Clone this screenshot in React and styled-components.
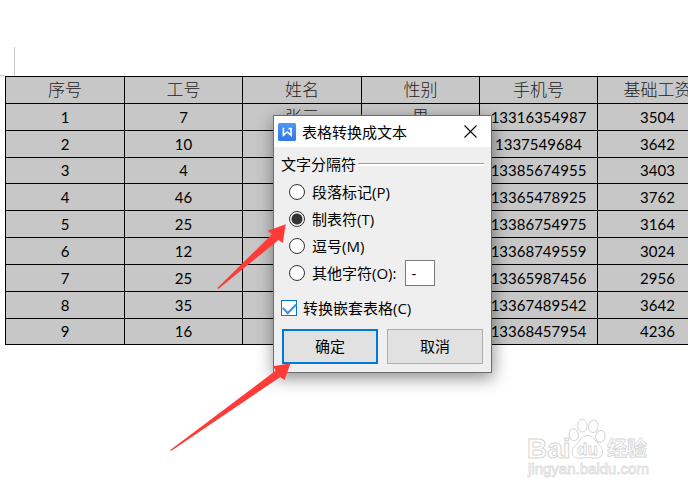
import React from "react";
import styled, { createGlobalStyle } from "styled-components";

const Global = createGlobalStyle`
  * { box-sizing: border-box; }
  html, body, #root { margin: 0; min-height: 100%; background: #fff; }
  body { overflow: hidden; color: #000; font-family: "Open Sans", "Noto Sans CJK SC", sans-serif; }
`;

const Page = styled.main`
  position: relative;
  min-height: 100vh;
  overflow: hidden;
  padding-top: 47px;
`;

const MarginMark = styled.div`
  width: 15px;
  height: 29px;
  border-right: 1px solid #c8c8c8;
  background: linear-gradient(#c8c8c8, #c8c8c8) left bottom / 5px 1px no-repeat;
`;

const Sheet = styled.table`
  table-layout: fixed;
  width: 712px;
  margin-left: 5px;
  border-collapse: collapse;
  background: #c7c7c7;
  font: 15px/20px Lato, "Noto Sans CJK SC", sans-serif;
  tr { height: 27px; }
  tbody tr:nth-child(3), tbody tr:last-child { height: 26px; }
`;

const Column = styled.col`
  width: ${(p) => p.$width}px;
`;

const Cell = styled.td`
  padding: 0 0 1px;
  border: 1px solid #000;
  text-align: center;
  white-space: nowrap;
`;

const HeadCell = styled(Cell).attrs({ as: "th", scope: "col" })`
  color: #222;
  font: 300 17px/20px "Noto Sans CJK SC", sans-serif;
  padding-bottom: 3px;
`;

const Word = styled.span`
  color: #222;
  font: 300 17px/20px "Noto Sans CJK SC", sans-serif;
`;

const Dialog = styled.section`
  position: absolute;
  left: 273px;
  top: 115px;
  width: 219px;
  border: 1px solid #6d6d6d;
  background: #efefef;
  box-shadow: 1px 5px 16px rgba(0, 0, 0, 0.45);
  font-size: 15px;
  line-height: 20px;
`;

const TitleBar = styled.header`
  display: flex;
  align-items: center;
  gap: 6px;
  height: 31px;
  padding: 0 14px 0 4px;
  background: #fff;
`;

const Title = styled.h1`
  flex: 1;
  margin: 0;
  font-size: 15px;
  font-weight: 400;
`;

const CloseButton = styled.button`
  display: flex;
  padding: 0;
  border: 0;
  background: none;
`;

const Form = styled.form`
  padding: 7px 7px 8px;
`;

const Group = styled.fieldset`
  display: flex;
  flex-direction: column;
  margin: 0;
  padding: 0;
  border: 0;
`;

const Legend = styled.legend`
  display: flex;
  align-items: center;
  gap: 2px;
  width: 100%;
  padding: 0;
  margin-bottom: 4px;
  &::after { content: ""; flex: 1; height: 2px; border-top: 1px solid #a0a0a0; background: #fff; }
`;

const Choice = styled.div`
  display: flex;
  align-items: center;
  gap: 7px;
  height: 27px;
  padding-left: 8px;
`;

const Radio = styled.input.attrs({ type: "radio", name: "separator" })`
  appearance: none;
  width: 16px;
  height: 16px;
  margin: 0;
  border: 1px solid #333;
  border-radius: 50%;
  background: #fff;
  &:checked { background: radial-gradient(circle, #333 0 5px, #fff 6px); }
`;

const CharInput = styled.input`
  width: 30px;
  height: 26px;
  margin: 0 0 0 2px;
  padding: 0 5px;
  border: 1px solid #7a7a7a;
  background: #fff;
  font: inherit;
`;

const CheckRow = styled.div`
  display: flex;
  align-items: center;
  gap: 6px;
  margin: 12px 0 11px;
`;

const CheckBox = styled.input.attrs({ type: "checkbox" })`
  appearance: none;
  width: 16px;
  height: 16px;
  margin: 0;
  border: 1px solid #0078d7;
  background: #fff;
  display: grid;
  place-items: center;
  &:checked::after {
    content: "";
    width: 11px;
    height: 6px;
    border: solid #3a8fe0;
    border-width: 0 0 2px 2px;
    transform: translateY(-1px) rotate(-45deg);
  }
`;

const Actions = styled.div`
  display: grid;
  grid-template-columns: 1fr 1fr;
  gap: 9px;
  padding: 0 1px;
`;

const Button = styled.button`
  height: 35px;
  padding: 0 0 2px;
  border: ${(p) => (p.$primary ? "2px solid #0078d7" : "1px solid #adadad")};
  background: #e1e1e1;
  color: #000;
  font: inherit;
`;

const Arrows = styled.svg`
  position: absolute;
  left: 0;
  top: 0;
  pointer-events: none;
`;

const Watermark = styled.svg`
  position: absolute;
  right: 34px;
  bottom: 13px;
  font-family: "Liberation Sans", "Noto Sans CJK SC", sans-serif;
  font-weight: 700;
`;

const columnWidths = [119, 118, 119, 118, 118, 120];
const headers = ["序号", "工号", "姓名", "性别", "手机号", "基础工资"];
const rows = [
  ["1", "7", <Word>张三</Word>, <Word>男</Word>, "13316354987", "3504"],
  ["2", "10", "", "", "1337549684", "3642"],
  ["3", "4", "", "", "13385674955", "3403"],
  ["4", "46", "", "", "13365478925", "3762"],
  ["5", "25", "", "", "13386754975", "3164"],
  ["6", "12", "", "", "13368749559", "3024"],
  ["7", "25", "", "", "13365987456", "2956"],
  ["8", "35", "", "", "13367489542", "3642"],
  ["9", "16", "", "", "13368457954", "4236"],
];
const separators = [
  ["paragraph", "段落标记(P)"],
  ["tab", "制表符(T)"],
  ["comma", "逗号(M)"],
  ["other", "其他字符(O):"],
];

const AppIcon = () => (
  <svg width="18" height="18" viewBox="0 0 18 18" aria-hidden="true">
    <defs>
      <linearGradient id="tile" x2="0" y2="1">
        <stop stopColor="#4f96f3" />
        <stop offset="1" stopColor="#3079e6" />
      </linearGradient>
    </defs>
    <rect width="18" height="18" rx="1.5" fill="url(#tile)" />
    <path d="M5.400 4.800v7.400L9.200 9l3.900 3.200V5.600H10.500" fill="none" stroke="#fff" strokeWidth="1.600" />
  </svg>
);

const CloseIcon = () => (
  <svg width="13" height="13" viewBox="0 0 13 13" aria-hidden="true">
    <path d="M.5.5l12 12M12.500.5l-12 12" stroke="#000" strokeWidth="1.100" />
  </svg>
);

export default function App() {
  return (
    <>
      <Global />
      <Page>
        <MarginMark />
        <Sheet>
          <colgroup>
            {columnWidths.map((w, i) => <Column key={i} $width={w} />)}
          </colgroup>
          <thead>
            <tr>{headers.map((h) => <HeadCell key={h}>{h}</HeadCell>)}</tr>
          </thead>
          <tbody>
            {rows.map((row) => (
              <tr key={row[0]}>{row.map((value, i) => <Cell key={i}>{value}</Cell>)}</tr>
            ))}
          </tbody>
        </Sheet>
        <Dialog role="dialog" aria-labelledby="dialog-title">
          <TitleBar>
            <AppIcon />
            <Title id="dialog-title">表格转换成文本</Title>
            <CloseButton type="button" aria-label="关闭"><CloseIcon /></CloseButton>
          </TitleBar>
          <Form onSubmit={(e) => e.preventDefault()}>
            <Group>
              <Legend>文字分隔符</Legend>
              {separators.map(([id, label]) => (
                <Choice key={id}>
                  <Radio id={id} value={id} defaultChecked={id === "tab"} />
                  <label htmlFor={id}>{label}</label>
                  {id === "other" && <CharInput aria-label="其他字符" defaultValue="-" />}
                </Choice>
              ))}
            </Group>
            <CheckRow>
              <CheckBox id="nested" defaultChecked />
              <label htmlFor="nested">转换嵌套表格(C)</label>
            </CheckRow>
            <Actions>
              <Button $primary type="submit">确定</Button>
              <Button type="button">取消</Button>
            </Actions>
          </Form>
        </Dialog>
        <Arrows width="300" height="460" viewBox="0 0 300 460" fill="#ff3b38" aria-hidden="true">
          <path d="M285.700 224.300L267.700 230.700L272 234.300L217.300 288L218.300 289L278.500 240L282.800 243Z" />
          <path d="M290.600 363.200L273.300 366.200L275.500 370.700L170.300 450L171 451L280.300 377L284.500 380Z" />
        </Arrows>
        <Watermark width="130" height="66" viewBox="0 0 130 66" fill="#fff" stroke="#d6d6d6" strokeWidth="1" role="img" aria-label="Baidu 经验 jingyan.baidu.com">
          <text x="3" y="44" fontSize="28">Bai</text>
          <ellipse cx="49.700" cy="20.700" rx="4.700" ry="6" transform="rotate(-8 49.700 20.700)" />
          <ellipse cx="58.400" cy="11.700" rx="4.700" ry="6.300" />
          <ellipse cx="69.300" cy="12.300" rx="4.700" ry="6.300" transform="rotate(10 69.300 12.300)" />
          <ellipse cx="76.300" cy="22.500" rx="4.700" ry="6" transform="rotate(8 76.300 22.500)" />
          <path d="M63 21.500c6 0 8 5 11 8s5 5 4.500 9-3.500 6-8 5.700c-3-.2-5-.7-7.500-.7s-4 .7-7 .7c-5 0-8-2-8-6.200 0-4 3-6 5.500-8.500S57.500 21.500 63 21.500z" />
          <text x="53" y="41" fontSize="17" strokeWidth=".8">du</text>
          <text x="83" y="42" fontSize="20" strokeWidth=".8">经验</text>
          <text x="4" y="60" fontSize="15" fontWeight="400" stroke="#dedede" strokeWidth=".9">jingyan.baidu.com</text>
        </Watermark>
      </Page>
    </>
  );
}
